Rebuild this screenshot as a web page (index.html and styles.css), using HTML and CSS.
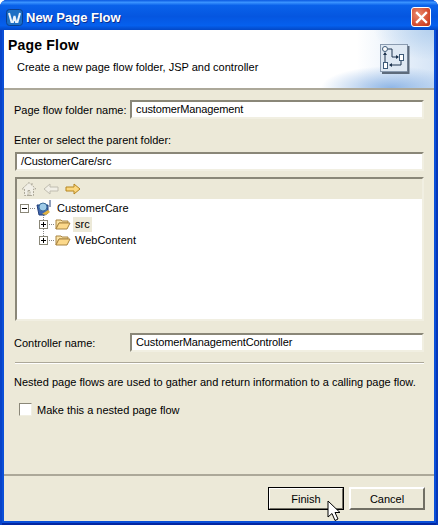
FILE: index.html
```html
<!DOCTYPE html>
<html lang="en">
<head>
  <meta charset="UTF-8" />
  <title>New Page Flow</title>
  <link rel="stylesheet" href="styles.css">
</head>
<body>
  <div class="window">
    <div class="titlebar">
      <svg class="app-icon" width="17" height="17" viewBox="0 0 17 17">
        <rect x="0.5" y="0.5" width="16" height="16" rx="3" fill="#1c6fc4" stroke="#0b3f8f"/>
        <path d="M3 4l2.500 9h1.500l1.500-6 1.500 6h1.500l2.500-9" fill="none" stroke="#e8f2fb" stroke-width="2"/>
      </svg>
      <span class="title">New Page Flow</span>
      <div class="close">
        <svg width="13" height="13" viewBox="0 0 13 13"><path d="M2 2l9 9M11 2l-9 9" stroke="#fff" stroke-width="2.4" stroke-linecap="square"/></svg>
      </div>
    </div>
    <div class="client">
      <div class="banner">
        <div class="banner-text">
          <h1>Page Flow</h1>
          <p>Create a new page flow folder, JSP and controller</p>
        </div>
        <div class="banner-icon">
          <svg width="30" height="30" viewBox="0 0 30 30">
            <rect x="0.5" y="0.5" width="27" height="27" fill="#dfe9f4" stroke="#8a9bb0"/>
            <path d="M28.500 2v27H2" fill="none" stroke="#5d6b7c" stroke-width="2"/>
            <path d="M8 5h4v8h6M21 16v5H10M5 18V9" fill="none" stroke="#1f3550"/>
            <circle cx="5" cy="5" r="2.500" fill="#fff" stroke="#3d5a78"/>
            <rect x="19.500" y="10.500" width="4" height="6" fill="#fff" stroke="#3d5a78"/>
            <rect x="3.500" y="18.500" width="4" height="6" fill="#fff" stroke="#3d5a78"/>
            <path d="M16 11l3 2-3 2zM12 19l-3 2 3 2zM3 11l2-3 2 3z" fill="#1f3550"/>
          </svg>
        </div>
      </div>
      <div class="form">
        <div class="row">
          <label class="row-label">Page flow folder name:</label>
          <div class="field grow">customerManagement</div>
        </div>
        <div class="parent-label">Enter or select the parent folder:</div>
        <div class="field inset">/CustomerCare/src</div>
        <div class="tree-box inset">
          <div class="toolbar">
            <svg width="16" height="16" viewBox="0 0 16 16"><path d="M8 1.500L1 8h2.500v6.500h9V8H15zM7 9.500h2v5H7zM11 2v3" fill="#f1efe6" stroke="#aca899" stroke-dasharray="2 1"/></svg>
            <svg width="16" height="16" viewBox="0 0 16 16"><path d="M1 8l6-5v3h8v4H7v3z" fill="#f1efe6" stroke="#c0bdb0"/></svg>
            <svg width="16" height="16" viewBox="0 0 16 16"><path d="M15 8L9 3v3H1v4h8v3z" fill="#fbd77e" stroke="#b5851f"/></svg>
          </div>
          <div class="tree">
            <div class="node">
              <svg class="toggle" width="9" height="9" viewBox="0 0 9 9"><rect x=".5" y=".5" width="8" height="8" fill="#fff" stroke="#8a8778"/><path d="M2 4.500h5" stroke="#000"/></svg>
              <svg class="dots" width="5" height="1"><path d="M0 .5h5" stroke="#888" stroke-dasharray="1 1"/></svg>
              <svg width="16" height="16" viewBox="0 0 16 16">
                <path d="M1 5h11v8l-3 2H3z" fill="#3f66b0" stroke="#23407a"/>
                <circle cx="7" cy="7" r="4" fill="#9ecbe8" stroke="#3a6c99"/>
                <path d="M6 14l6-4 2 2-4 3z" fill="#e2b33f"/>
                <path d="M14 0v7" stroke="#23407a"/>
              </svg>
              <span class="node-text root">CustomerCare</span>
            </div>
            <div class="node child">
              <svg class="toggle" width="9" height="9" viewBox="0 0 9 9"><rect x=".5" y=".5" width="8" height="8" fill="#fff" stroke="#8a8778"/><path d="M2 4.500h5M4.500 2v5" stroke="#000"/></svg>
              <svg class="dots" width="5" height="1"><path d="M0 .5h5" stroke="#888" stroke-dasharray="1 1"/></svg>
              <svg width="16" height="16" viewBox="0 0 16 16">
                <path d="M1 4h5l1 1h6v2H4L1 13z" fill="#fbe3a5" stroke="#a98440"/>
                <path d="M4 7h11l-3 6H1z" fill="#fcd98b" stroke="#a98440"/>
              </svg>
              <span class="node-text selected">src</span>
            </div>
            <div class="node child">
              <svg class="toggle" width="9" height="9" viewBox="0 0 9 9"><rect x=".5" y=".5" width="8" height="8" fill="#fff" stroke="#8a8778"/><path d="M2 4.500h5M4.500 2v5" stroke="#000"/></svg>
              <svg class="dots" width="5" height="1"><path d="M0 .5h5" stroke="#888" stroke-dasharray="1 1"/></svg>
              <svg width="16" height="16" viewBox="0 0 16 16">
                <path d="M1 4h5l1 1h6v2H4L1 13z" fill="#fbe3a5" stroke="#a98440"/>
                <path d="M4 7h11l-3 6H1z" fill="#fcd98b" stroke="#a98440"/>
              </svg>
              <span class="node-text">WebContent</span>
            </div>
          </div>
        </div>
        <div class="row controller">
          <label class="row-label">Controller name:</label>
          <div class="field grow">CustomerManagementController</div>
        </div>
        <div class="sep inset"></div>
        <p class="note">Nested page flows are used to gather and return information to a calling page flow.</p>
        <div class="check-row">
          <span class="checkbox"></span>
          <span>Make this a nested page flow</span>
        </div>
      </div>
      <div class="footer">
        <button class="btn default">Finish</button>
        <button class="btn">Cancel</button>
      </div>
    </div>
    <svg class="cursor" width="16" height="23" viewBox="0 0 16 23">
      <path d="M1 1v16l4-3.500 3 7 3-1.500-3-6.500h5z" fill="#fff" stroke="#000"/>
    </svg>
  </div>
</body>
</html>
```
FILE: styles.css
```css
html, body {
  margin: 0;
  padding: 0;
}
body {
  width: 438px;
  height: 525px;
  overflow: hidden;
  font-family: "Liberation Sans", Arial, sans-serif;
  font-size: 11px;
  color: #000;
}
.window {
  position: relative;
  width: 438px;
  height: 525px;
  box-sizing: border-box;
  display: flex;
  flex-direction: column;
  padding: 0 4px 4px 4px;
  background: #0a4fd8;
  border-radius: 7px 7px 0 0;
  box-shadow: inset 2px 0 0 #0843c8, inset -2px 0 0 #0437b8, inset 0 -2px 0 #0327a0;
}
.titlebar {
  height: 30px;
  flex: none;
  box-sizing: border-box;
  margin: 0 -4px;
  padding: 4px 7px 0 6px;
  display: flex;
  align-items: center;
  gap: 3px;
  border-radius: 7px 7px 0 0;
  background: linear-gradient(180deg, #0a58e0 0%, #3a93ff 8%, #0a62ea 18%, #0556e0 55%, #0560ee 85%, #0348c6 100%);
}
.title {
  flex: 1;
  color: #fff;
  font-weight: 700;
  font-size: 13px;
  text-shadow: 1px 1px 0 #0a2f8f;
}
.close {
  width: 20px;
  height: 20px;
  box-sizing: border-box;
  border: 1px solid #fff;
  border-radius: 3px;
  background: radial-gradient(circle at 35% 35%, #ea8a6e, #d2472a 70%, #b83415);
  display: flex;
  align-items: center;
  justify-content: center;
}
.client {
  flex: 1;
  display: flex;
  flex-direction: column;
  background: #ece9d8;
  min-height: 0;
}
.banner {
  height: 58px;
  flex: none;
  display: flex;
  justify-content: space-between;
  background:
    radial-gradient(ellipse 60px 30px at 100% 0, #b4d0ee 0%, rgba(180,208,238,0) 100%),
    radial-gradient(ellipse 70px 22px at 90% 100%, #8fb6e6 0%, rgba(143,182,230,0) 100%),
    linear-gradient(90deg, #fff 82%, #d6e5f6 100%);
  border-bottom: 2px solid #aca899;
}
.banner-text h1 {
  margin: 7px 0 0 4px;
  font-size: 14px;
  font-weight: 700;
  letter-spacing: .2px;
  line-height: 17px;
}
.banner-text p {
  margin: 6px 0 0 13px;
  line-height: 15px;
}
.banner-icon {
  padding: 14px 24px 0 0;
}
.form {
  flex: 1;
  display: flex;
  flex-direction: column;
  padding: 10px 10px 0 10px;
}
.inset {
  margin-left: 1px;
}
.row {
  display: flex;
  align-items: center;
}
.row-label {
  width: 116px;
  flex: none;
  white-space: nowrap;
}
.field {
  height: 19px;
  box-sizing: border-box;
  padding: 0 4px;
  line-height: 15px;
  letter-spacing: -.12px;
  background: #fff;
  border: 2px solid #f1efe2;
  border-top-color: #8a8778;
  border-left-color: #8a8778;
  white-space: nowrap;
}
.grow {
  flex: 1;
}
.parent-label {
  margin: 13px 0 4px 0;
  line-height: 16px;
}
.tree-box {
  margin-top: 6px;
  height: 144px;
  flex: none;
  box-sizing: border-box;
  background: #fff;
  border: 2px solid #f1efe2;
  border-top-color: #8a8778;
  border-left-color: #8a8778;
}
.toolbar {
  height: 20px;
  display: flex;
  align-items: center;
  gap: 6px;
  padding-left: 4px;
  background: #ece9d8;
}
.tree {
  position: relative;
  padding-top: 1px;
}
/* dotted line from the project down to its children */
.tree::before {
  content: "";
  position: absolute;
  left: 26px;
  top: 14px;
  height: 23px;
  border-left: 1px dotted #888;
}
.node {
  position: relative;
  height: 16px;
  display: flex;
  align-items: center;
  padding-left: 3px;
  gap: 1px;
}
.child {
  padding-left: 22px;
}
.node-text {
  margin-left: 1px;
  padding: 0 2px;
  line-height: 15px;
}
.root {
  margin-left: 2px;
}
.selected {
  background: #ece9d8;
}
.controller {
  margin-top: 12px;
}
.sep {
  margin-top: 10px;
  height: 2px;
  background: linear-gradient(#aca899 50%, #fff 50%);
}
.note {
  margin: 10px 0 0 0;
  line-height: 16px;
  white-space: nowrap;
}
.check-row {
  margin: 13px 0 0 5px;
  display: flex;
  align-items: center;
  gap: 5px;
}
.checkbox {
  width: 13px;
  height: 13px;
  box-sizing: border-box;
  background: #fff;
  border: 1px solid #8a8778;
  border-color: #8a8778 #f1efe2 #f1efe2 #8a8778;
}
.footer {
  height: 47px;
  flex: none;
  display: flex;
  justify-content: flex-end;
  gap: 5px;
  padding: 11px 9px 0 0;
  box-sizing: border-box;
  border-top: 2px solid #aca899;
}
.btn {
  width: 76px;
  height: 23px;
  padding: 0;
  font: inherit;
  color: #000;
  background: #ece9d8;
  border: 2px solid #fff;
  border-right-color: #716f64;
  border-bottom-color: #716f64;
}
.default {
  outline: 1px solid #000;
  outline-offset: -1px;
}
.cursor {
  position: absolute;
  left: 327px;
  top: 500px;
}
```
